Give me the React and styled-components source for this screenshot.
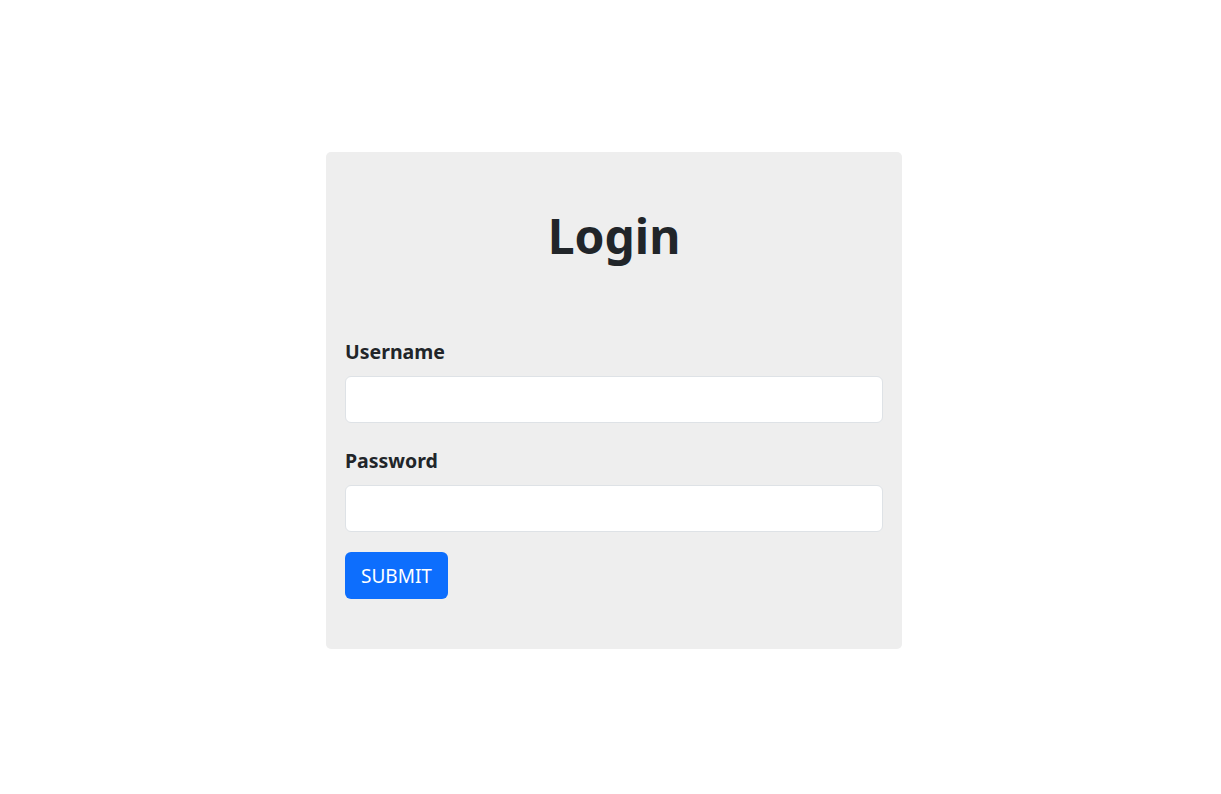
import React from 'react';
import styled, { createGlobalStyle } from 'styled-components';

const GlobalStyle = createGlobalStyle`
  html, body {
    margin: 0;
    padding: 0;
    background: #fff;
    font-family: "Noto Sans", "Open Sans", sans-serif;
    color: #212529;
  }
  * { box-sizing: border-box; }
`;

const Page = styled.div`
  min-height: 794px;
  padding: 152px 0 0 326px;
`;

const Card = styled.div`
  width: 576px;
  height: 497px;
  background: #eeeeee;
  border-radius: 5px;
  padding: 20px 19px;
`;

const Title = styled.h1`
  margin: 35px 0 0;
  font-size: 48px;
  line-height: 57px;
  font-weight: 700;
  text-align: center;
`;

const Form = styled.form`
  margin-top: 74px;
  display: flex;
  flex-direction: column;
`;

const Label = styled.label`
  display: block;
  font-size: 19.5px;
  line-height: 27px;
  font-weight: 700;
  margin-bottom: 11px;
`;

const Input = styled.input`
  display: block;
  width: 538px;
  height: 47px;
  border: 1px solid #dee2e6;
  border-radius: 6px;
  background: #fff;
  padding: 0 12px;
  font-size: 18px;
  font-family: inherit;
  margin-bottom: ${p => p.$gap}px;
  outline: none;
`;

const Submit = styled.button`
  align-self: flex-start;
  height: 47px;
  padding: 0 16px;
  background: #0d6efd;
  color: #fff;
  border: none;
  border-radius: 6px;
  font-family: inherit;
  font-size: 19px;
  cursor: pointer;
`;

export default function App() {
  return (
    <>
      <GlobalStyle />
      <Page>
        <Card>
          <Title>Login</Title>
          <Form onSubmit={e => e.preventDefault()}>
            <Label htmlFor="username">Username</Label>
            <Input id="username" type="text" $gap={24} />
            <Label htmlFor="password">Password</Label>
            <Input id="password" type="password" $gap={20} />
            <Submit type="submit">SUBMIT</Submit>
          </Form>
        </Card>
      </Page>
    </>
  );
}
